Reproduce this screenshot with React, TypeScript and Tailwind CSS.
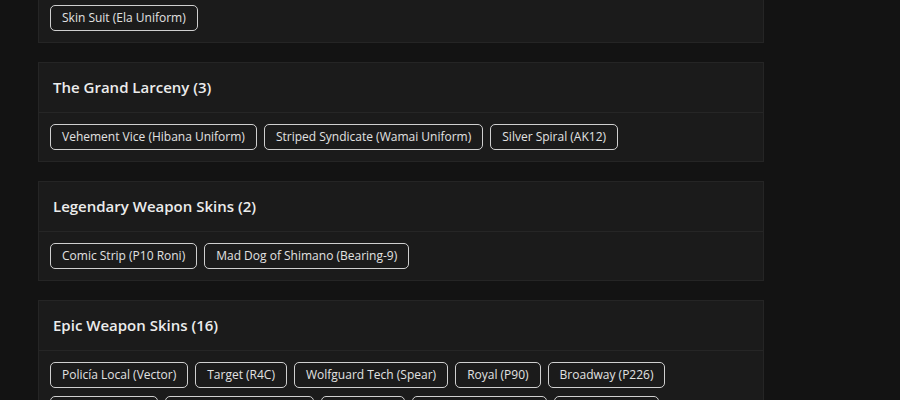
import React from 'react'

type Group = {
  title: string
  skins: string[]
}

const groups: Group[] = [
  { title: 'Elite Uniforms (1)', skins: ['Skin Suit (Ela Uniform)'] },
  {
    title: 'The Grand Larceny (3)',
    skins: ['Vehement Vice (Hibana Uniform)', 'Striped Syndicate (Wamai Uniform)', 'Silver Spiral (AK12)'],
  },
  { title: 'Legendary Weapon Skins (2)', skins: ['Comic Strip (P10 Roni)', 'Mad Dog of Shimano (Bearing-9)'] },
  {
    title: 'Epic Weapon Skins (16)',
    skins: [
      'Policía Local (Vector)',
      'Target (R4C)',
      'Wolfguard Tech (Spear)',
      'Royal (P90)',
      'Broadway (P226)',
      'Hexcode (AUG)',
      'Crimson Dawn (MP5K)',
      'Glitch (M4)',
      'Neon Nights (416-C)',
      'Frostbite (P12)',
      'Hot Rod (MP7)',
      'Carbon Edge (T-95)',
    ],
  },
]

function SkinTag({ name }: { name: string }) {
  return (
    <span className="inline-flex h-[26px] items-center rounded-[5px] border border-[#cfcfcf] px-[11px] text-[12px] leading-none text-[#e2e2e2]">
      {name}
    </span>
  )
}

function GroupCard({ group }: { group: Group }) {
  return (
    <div className="border border-[#252525] bg-[#1b1b1b]">
      <div className="flex h-[50px] items-center border-b border-[#262626] px-[14px]">
        <h2 className="text-[15px] font-semibold text-[#ececec]">{group.title}</h2>
      </div>
      <div className="flex flex-wrap gap-x-[7px] gap-y-[8px] px-[11px] pt-[11px] pb-[11px]">
        {group.skins.map((skin) => (
          <SkinTag key={skin} name={skin} />
        ))}
      </div>
    </div>
  )
}

export default function App() {
  return (
    <div
      className="h-[400px] w-[900px] overflow-hidden bg-[#131313]"
      style={{ fontFamily: '"Open Sans", "Liberation Sans", sans-serif' }}
    >
      <div className="-mt-[57px] ml-[38px] flex w-[726px] flex-col gap-[19px]">
        {groups.map((group) => (
          <GroupCard key={group.title} group={group} />
        ))}
      </div>
    </div>
  )
}
